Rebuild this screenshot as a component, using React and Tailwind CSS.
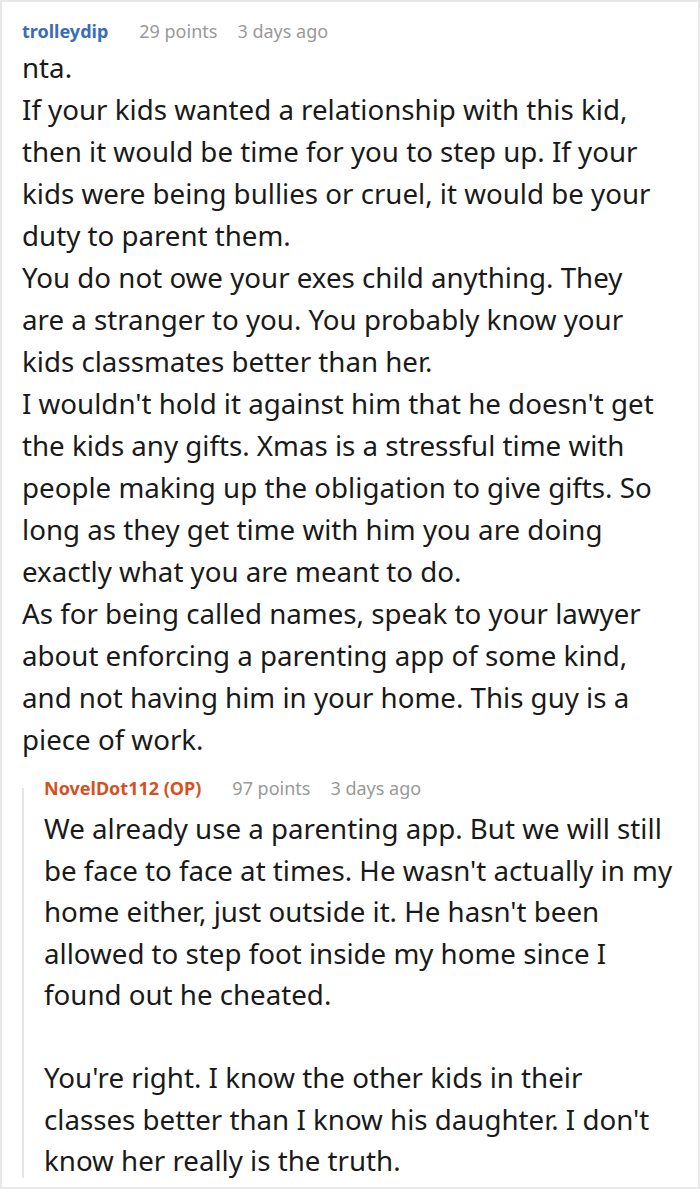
import React from 'react';

const font = { fontFamily: '"Noto Sans", "Open Sans", sans-serif' };

const Meta = ({ name, points, time, nameClass }) => (
  <div className="flex items-baseline text-[18px] leading-[24px]">
    <span className={`font-bold ${nameClass}`}>{name}</span>
    <span className="ml-[31px] text-[#999999]">{points}</span>
    <span className="ml-[20px] text-[#999999]">{time}</span>
  </div>
);

const App = () => {
  const comment = [
    'nta.',
    'If your kids wanted a relationship with this kid, then it would be time for you to step up. If your kids were being bullies or cruel, it would be your duty to parent them.',
    "You do not owe your exes child anything. They are a stranger to you. You probably know your kids classmates better than her.",
    "I wouldn't hold it against him that he doesn't get the kids any gifts. Xmas is a stressful time with people making up the obligation to give gifts. So long as they get time with him you are doing exactly what you are meant to do.",
    'As for being called names, speak to your lawyer about enforcing a parenting app of some kind, and not having him in your home. This guy is a piece of work.',
  ];

  return (
    <div className="w-[700px] h-[1192px] bg-white overflow-hidden" style={font}>
      <div className="h-[1189px] border-2 border-[#e8e8e8] pl-[20px] pr-[36px] pt-[17px]">
        <Meta name="trolleydip" points="29 points" time="3 days ago" nameClass="text-[#3a6db5]" />
        <div className="mt-[3px] text-[27.7px] leading-[42px] text-[#1a1a1a]">
          {comment.map((p, i) => (
            <p key={i}>{p}</p>
          ))}
        </div>

        {/* reply */}
        <div className="mt-[16px] -mr-[18px] flex">
          <div className="w-[2px] bg-[#e6e6e6] mt-[12px] mb-[4px]" />
          <div className="pl-[20px] flex-1">
            <Meta name="NovelDot112 (OP)" points="97 points" time="3 days ago" nameClass="text-[#d4521f]" />
            <div className="mt-[8px] text-[27.7px] leading-[41.5px] text-[#1a1a1a]">
              <p>
                We already use a parenting app. But we will still be face to face at times. He wasn't actually in my home either, just outside it. He hasn't been allowed to step foot inside my home since I found out he cheated.
              </p>
              <p className="mt-[41.5px]">
                You're right. I know the other kids in their classes better than I know his daughter. I don't know her really is the truth.
              </p>
            </div>
          </div>
        </div>
      </div>
    </div>
  );
};

export default App;
